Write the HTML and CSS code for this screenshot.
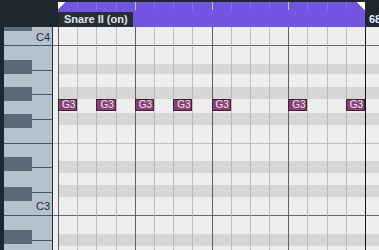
FILE: index.html
```html
<!DOCTYPE html>
<html lang="en">
<head>
    <meta charset="UTF-8">
    <title>Key Editor</title>
    <link rel="stylesheet" href="styles.css">
</head>
<body>
    <div class="app">
        <div class="head">
            <div class="corner"></div>
            <div class="event">
                <div class="ticks">
                    <span class="first"></span><span></span><span></span><span></span>
                    <span class="bar"></span><span></span><span></span><span></span>
                    <span class="bar"></span><span></span><span></span><span></span>
                    <span class="bar"></span><span></span><span></span><span></span>
                </div>
                <div class="label">Snare II (on)</div>
            </div>
            <div class="pos">68</div>
        </div>

        <div class="body">
            <div class="keys">
                <div class="edge"></div>
                <div class="kb">
                    <div class="whites">
                        <div class="wk h18 c c4">C4</div>
                        <div class="wk h25 line"></div>
                        <div class="wk h24 line"></div>
                        <div class="wk h25 line"></div>
                        <div class="wk h24 line"></div>
                        <div class="wk h24 line"></div>
                        <div class="wk h25 line"></div>
                        <div class="wk h23 line c c3">C3</div>
                        <div class="wk h25 line"></div>
                        <div class="wk rest line"></div>
                    </div>
                    <div class="blacks">
                        <div class="bk top"></div>
                        <div class="gap g29"></div>
                        <div class="bk"></div>
                        <div class="gap g13"></div>
                        <div class="bk"></div>
                        <div class="gap g13"></div>
                        <div class="bk"></div>
                        <div class="gap g29"></div>
                        <div class="bk"></div>
                        <div class="gap g16"></div>
                        <div class="bk"></div>
                        <div class="gap g29"></div>
                        <div class="bk"></div>
                    </div>
                </div>
            </div>

            <div class="roll">
                <div class="rows">
                    <div class="row h18"></div>
                    <div class="row h19 oct"></div>
                    <div class="row h10 dk"></div>
                    <div class="row h13"></div>
                    <div class="row h12 dk"></div>
                    <div class="row h14"></div>
                    <div class="row h12 dk"></div>
                    <div class="row h18"></div>
                    <div class="row h18 ef"></div>
                    <div class="row h12 dk"></div>
                    <div class="row h12"></div>
                    <div class="row h12 dk"></div>
                    <div class="row h18"></div>
                    <div class="row h19 oct"></div>
                    <div class="row h12 dk"></div>
                    <div class="row rest"></div>
                </div>
                <div class="cols">
                    <span class="bar"></span><span></span><span></span><span></span>
                    <span class="bar"></span><span></span><span></span><span></span>
                    <span class="bar"></span><span></span><span></span><span></span>
                    <span class="bar"></span><span></span><span></span><span></span>
                    <span class="end"></span>
                </div>
                <div class="notes">
                    <div class="note">G3</div><div class="cell"></div>
                    <div class="note">G3</div><div class="cell"></div>
                    <div class="note">G3</div><div class="cell"></div>
                    <div class="note">G3</div><div class="cell"></div>
                    <div class="note">G3</div><div class="cell"></div>
                    <div class="cell"></div><div class="cell"></div>
                    <div class="note">G3</div><div class="cell"></div>
                    <div class="cell"></div><div class="note">G3</div>
                </div>
            </div>
        </div>
    </div>
</body>
</html>
```

FILE: styles.css
```css
body {
    margin: 0;
    background: #1d272d;
    font-family: "Liberation Sans", Arial, sans-serif;
}

.app {
    width: 379px;
    height: 250px;
    overflow: hidden;
}

/* header with the event bar */
.head {
    display: flex;
    height: 27px;
    background: #1d272d;
}
.corner {
    width: 58px;
    flex: none;
}
.event {
    width: 307px;
    flex: none;
    margin-top: 2px;
    display: flex;
    flex-direction: column;
    background:
        linear-gradient(135deg, #fff 50%, transparent 50%) left top / 8px 8px no-repeat,
        linear-gradient(225deg, #fff 50%, transparent 50%) right top / 8px 8px no-repeat,
        #7256e1;
}
.ticks {
    display: flex;
    height: 10px;
}
.ticks span {
    flex: none;
    width: 19.2px;
    height: 8px;
    box-sizing: border-box;
    border-left: 1px solid #8470ea;
}
.ticks span.bar {
    border-color: #cbc2f6;
}
.ticks span.first {
    border: none;
}
.label {
    width: 75px;
    height: 15px;
    box-sizing: border-box;
    padding-left: 6px;
    background: #262f36;
    color: #e1e5ea;
    font-size: 11px;
    font-weight: bold;
    line-height: 15px;
    white-space: nowrap;
}
.pos {
    flex: 1;
    min-width: 0;
    padding: 12px 0 0 4px;
    color: #e4eeff;
    font-size: 11px;
    font-weight: bold;
    line-height: 15px;
    white-space: nowrap;
    overflow: hidden;
}

.body {
    display: flex;
    height: 223px;
}

/* keyboard */
.keys {
    display: flex;
    width: 53px;
    flex: none;
}
.edge {
    width: 4px;
    background: #1c2830;
}
.kb {
    width: 48px;
    display: grid;
    background: #b5c1cb;
    border-right: 1px solid #27313a;
}
.whites, .blacks {
    grid-area: 1 / 1;
    display: flex;
    flex-direction: column;
}
.wk {
    flex: none;
    box-sizing: border-box;
}
.wk.line {
    border-top: 1px solid #4a5866;
}
.wk.c {
    display: flex;
    justify-content: flex-end;
    align-items: flex-end;
    padding-right: 2px;
    color: #1b2a44;
    font-size: 11px;
    line-height: 13px;
}
.wk.c4 { padding-bottom: 1px; }
.wk.c3 { padding-bottom: 2px; }
.wk.rest { flex: 1; }

.bk {
    flex: none;
    width: 28px;
    height: 14px;
    background: #5a6a78;
}
.bk.top { height: 4px; }
.gap { flex: none; }
.g13 { height: 13px; }
.g16 { height: 16px; }
.g29 { height: 29px; }

/* piano roll */
.roll {
    flex: 1;
    display: grid;
    background: #eeeeee;
}
.rows, .cols, .notes {
    grid-area: 1 / 1;
}
.rows {
    display: flex;
    flex-direction: column;
}
.row {
    flex: none;
    box-sizing: border-box;
    background: #eeeeee;
}
.row.dk {
    background: linear-gradient(to right, #eeeeee 5px, #d6d6d6 5px);
}
.row.oct { border-top: 1px solid #666; }
.row.ef { border-top: 1px solid #bdbdbd; }
.row.rest { flex: 1; }

.h10 { height: 10px; }
.h12 { height: 12px; }
.h13 { height: 13px; }
.h14 { height: 14px; }
.h18 { height: 18px; }
.h19 { height: 19px; }
.h23 { height: 23px; }
.h24 { height: 24px; }
.h25 { height: 25px; }

.cols {
    display: flex;
    padding-left: 5px;
}
.cols span {
    flex: none;
    width: 19.2px;
    box-sizing: border-box;
    border-left: 1px solid #bcbcbc;
}
.cols span.bar {
    border-color: #626262;
}
.cols span.end {
    flex: 1;
    border-color: #111;
}

.notes {
    display: flex;
    align-items: flex-start;
    padding: 72px 0 0 5px;
}
.notes .cell, .notes .note {
    flex: none;
    width: 19.2px;
    height: 12px;
    box-sizing: border-box;
}
.note {
    padding-left: 3px;
    background: #8a4275;
    border: 1px solid #43203a;
    color: #f4e6f2;
    font-size: 10px;
    line-height: 10px;
}
```
